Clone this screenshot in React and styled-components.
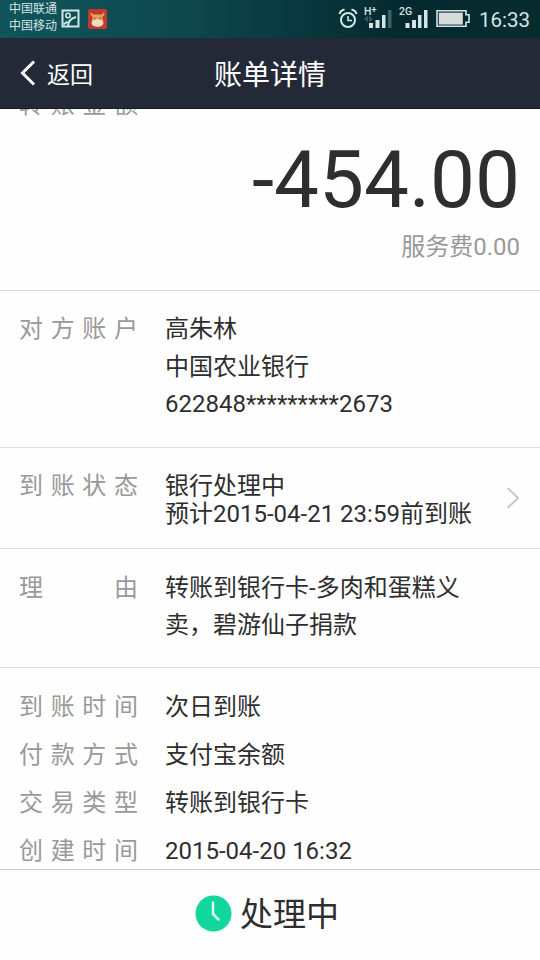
import styled, { createGlobalStyle } from 'styled-components'

const GlobalStyle = createGlobalStyle`
  * {
    box-sizing: border-box;
  }
  body {
    margin: 0;
    background: #fefefe;
    font-family: Roboto, "Noto Sans CJK SC", sans-serif;
  }
  p {
    margin: 0;
  }
`

const Screen = styled.div`
  display: flex;
  flex-direction: column;
  width: 540px;
  height: 960px;
  overflow: hidden;
  color: #2e2e2e;
`

const StatusBar = styled.div`
  display: flex;
  justify-content: space-between;
  flex: none;
  height: 38px;
  padding: 0 9px;
  background: linear-gradient(to right, #10555b 0%, #0d474c 35%, #04292f 75%, #062c30 100%);
  color: #d3e6e6;
`

const StatusGroup = styled.div`
  display: flex;
  align-items: flex-start;
`

const Carriers = styled.div`
  width: 52px;
  padding-top: 1px;
  font-size: 12px;
  line-height: 16.5px;
  white-space: nowrap;
`

const StatusIcon = styled.svg`
  flex: none;
  display: block;
  margin-top: ${props => props.$top || 0}px;
  margin-left: ${props => props.$left || 0}px;
`

const Signal = styled.div`
  display: flex;
  flex-direction: column;
  width: 30px;
  margin-left: ${props => props.$left}px;
  padding-top: 7px;
  font-size: 10.5px;
  font-weight: 500;
  line-height: 10px;
`

const Plus = styled.span`
  font-size: 9px;
  vertical-align: 2px;
  line-height: 1px;
`

const Bars = styled.svg`
  display: block;
  margin: -7px 0 0 0;
`

const Clock = styled.span`
  width: 52px;
  margin-left: 8px;
  font-size: 20.5px;
  line-height: 40px;
  white-space: nowrap;
`

const NavBar = styled.header`
  display: grid;
  grid-template-columns: 1fr auto 1fr;
  align-items: center;
  flex: none;
  height: 71px;
  padding: 0 20px;
  border-bottom: 1px solid #171c28;
  background: #242938;
  color: #fff;
`

const Back = styled.div`
  display: flex;
  align-items: center;
  gap: 11px;
  font-size: 23px;
`

const Title = styled.h1`
  margin: 0;
  font-size: 28px;
  font-weight: 400;
`

const Content = styled.main`
  flex: none;
  height: 760px;
  overflow: hidden;
`

const AmountSection = styled.section`
  display: flex;
  flex-direction: column;
  height: 182px;
  padding: 0 20px 0 19px;
  border-bottom: 1px solid #dadada;
`

const Amount = styled.p`
  margin-top: 15px;
  text-align: right;
  font-size: 80px;
  line-height: 80px;
`

const Fee = styled.p`
  margin-top: 9px;
  color: #999;
  text-align: right;
  font-size: 24px;
  line-height: 36px;
`

const Section = styled.section`
  display: flex;
  flex-direction: column;
  height: ${props => props.$height}px;
  padding: ${props => props.$top}px 20px 0 19px;
  border-bottom: ${props => (props.$last ? 'none' : '1px solid #dadada')};
`

const Row = styled.div`
  display: flex;
  min-height: ${props => props.$height || 0}px;
`

const LabelText = styled.div`
  display: flex;
  justify-content: space-between;
  flex: none;
  width: 119px;
  height: 37.5px;
  margin-top: ${props => props.$shift || 0}px;
  margin-right: 27px;
  color: #999;
  font-size: 24px;
  line-height: 37.5px;
`

const Value = styled.div`
  flex: 1;
  font-size: 24px;
  line-height: ${props => props.$line || 37.5}px;
  white-space: nowrap;
`

const Arrow = styled.svg`
  flex: none;
  margin-top: 15px;
`

const Footer = styled.footer`
  display: flex;
  align-items: center;
  justify-content: center;
  gap: 8px;
  flex: 1;
  padding: 0 6px 3px 0;
  border-top: 1px solid #ccc;
  font-size: 33px;
`

const State = styled.span`
  margin-top: -4px;
`

const details = [
  { label: '到账时间', value: '次日到账' },
  { label: '付款方式', value: '支付宝余额' },
  { label: '交易类型', value: '转账到银行卡' },
  { label: '创建时间', value: '2015-04-20 16:32' },
]

// characters are spread over the full label column
const Label = ({ text, shift }) => (
  <LabelText $shift={shift}>
    {text.split('').map((char, i) => <span key={i}>{char}</span>)}
  </LabelText>
)

const SignalBars = ({ weak }) => (
  <Bars width="30" height="19" viewBox="0 0 30 19" fill="#d3e6e6">
    {weak && <path d="M0 9l4-3.500v7zM9 9l-4-3.500v7z" fill="#35565a" />}
    <rect x={weak ? 5 : 6.5} y="13" width="4" height="5" />
    <rect x={weak ? 11.5 : 13} y="10" width="4" height="8" />
    <rect x={weak ? 18 : 19} y="5" width="3.5" height="13" />
    <rect x={weak ? 24 : 25} y="0" width="3.5" height="18" fill={weak ? '#3f6266' : '#d3e6e6'} />
  </Bars>
)

const App = () => {
  return (
    <Screen>
      <GlobalStyle />
      <StatusBar>
        <StatusGroup>
          <Carriers>
            <p>中国联通</p>
            <p>中国移动</p>
          </Carriers>
          <StatusIcon $top={9} width="19" height="19" viewBox="0 0 19 19" fill="none" stroke="#cfe6e6" strokeWidth="2">
            <rect x="1.500" y="1.500" width="16" height="16" />
            <circle cx="7" cy="6.500" r="2.200" strokeWidth="1.600" />
            <path d="M2.500 15.500l4-3M7 17c0-4 3-7.500 8-9" strokeWidth="2" />
          </StatusIcon>
          <StatusIcon $top={9} $left={8} width="19" height="20" viewBox="0 0 19 20">
            <rect width="19" height="20" rx="2" fill="#c3382f" />
            <path d="M3 3c-1 3 0 4 2 5-1 2-1 3-1 5 0 6 11 6 11 0 0-2 0-3-1-5 2-1 3-2 2-5-1 2-2 2.500-4 2.500H7C5 5.500 4 5 3 3z" fill="#e0a35c" />
            <ellipse cx="9.500" cy="14" rx="6" ry="3.800" fill="#f0dcc0" />
            <circle cx="7" cy="9.500" r=".8" fill="#7a4a2b" />
            <circle cx="12" cy="9.500" r=".8" fill="#7a4a2b" />
          </StatusIcon>
        </StatusGroup>
        <StatusGroup>
          <StatusIcon $top={8} width="20" height="21" viewBox="0 0 20 21" fill="none" stroke="#d3e6e6" strokeWidth="2">
            <circle cx="10" cy="12" r="7" />
            <path d="M10 8v4.500h4" strokeWidth="1.600" />
            <path d="M1.500 6C2 4 4 2 6.500 1.500M18.500 6C18 4 16 2 13.500 1.500" />
          </StatusIcon>
          <Signal $left={6}>
            <span>H<Plus>+</Plus></span>
            <SignalBars weak />
          </Signal>
          <Signal $left={5}>
            <span>2G</span>
            <SignalBars />
          </Signal>
          <StatusIcon $top={9} $left={7} width="35" height="19" viewBox="0 0 35 19">
            <path d="M1 1.800h29v4h3v7.500h-3v4H1z" fill="none" stroke="#d3e6e6" strokeWidth="1.600" />
            <rect x="2.800" y="3.600" width="24" height="12" fill="#d5dcda" />
          </StatusIcon>
          <Clock>16:33</Clock>
        </StatusGroup>
      </StatusBar>

      <NavBar>
        <Back>
          <svg width="16" height="26" viewBox="0 0 16 26" fill="none" stroke="#fff" strokeWidth="3">
            <path d="M14 1.500L2.500 13L14 24.500" />
          </svg>
          <span>返回</span>
        </Back>
        <Title>账单详情</Title>
      </NavBar>

      <Content>
        <AmountSection>
          <Label text="转账金额" shift={-22} />
          <Amount>-454.00</Amount>
          <Fee>服务费0.00</Fee>
        </AmountSection>

        <Section $height={157} $top={20}>
          <Row>
            <Label text="对方账户" />
            <Value>
              <p>高朱林</p>
              <p>中国农业银行</p>
              <p>622848*********2673</p>
            </Value>
          </Row>
        </Section>

        <Section $height={101} $top={24}>
          <Row>
            <Label text="到账状态" shift={-4} />
            <Value $line={28}>
              <p>银行处理中</p>
              <p>预计2015-04-21 23:59前到账</p>
            </Value>
            <Arrow width="14" height="22" viewBox="0 0 14 22" fill="none" stroke="#c7c7c7" strokeWidth="2">
              <path d="M1.500 1L12 11L1.500 21" />
            </Arrow>
          </Row>
        </Section>

        <Section $height={119} $top={20.5}>
          <Row>
            <Label text="理由" />
            <Value>
              <p>转账到银行卡-多肉和蛋糕义</p>
              <p>卖，碧游仙子捐款</p>
            </Value>
          </Row>
        </Section>

        <Section $height={201} $top={21} $last>
          {details.map(item => (
            <Row key={item.label} $height={48}>
              <Label text={item.label} />
              <Value>{item.value}</Value>
            </Row>
          ))}
        </Section>
      </Content>

      <Footer>
        <svg width="37" height="37" viewBox="0 0 37 37" fill="none">
          <circle cx="18.500" cy="18.500" r="18" fill="#12d79d" />
          <path d="M18 7.500V19L23.500 24.500" stroke="#d8fff0" strokeWidth="2.500" strokeLinecap="round" />
        </svg>
        <State>处理中</State>
      </Footer>
    </Screen>
  )
}

export default App
